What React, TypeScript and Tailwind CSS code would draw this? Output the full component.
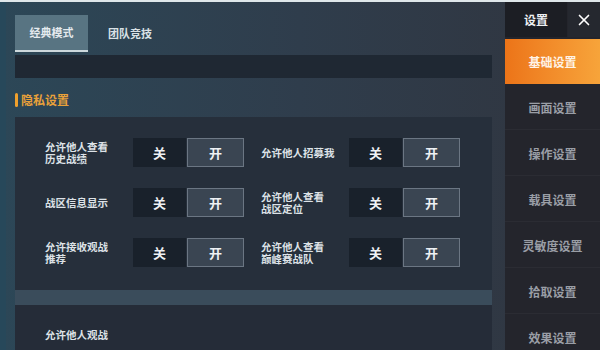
import { X } from "lucide-react";

const rows = [
  [
    { label: "允许他人查看\n历史战绩" },
    { label: "允许他人招募我" },
  ],
  [
    { label: "战区信息显示" },
    { label: "允许他人查看\n战区定位" },
  ],
  [
    { label: "允许接收观战\n推荐" },
    { label: "允许他人查看\n巅峰赛战队" },
  ],
];

const menu = ["画面设置", "操作设置", "载具设置", "灵敏度设置", "拾取设置", "效果设置"];

function Toggle() {
  return (
    <div className="flex h-[29px] w-[111px] text-[13px] font-bold text-[#eef1f4]">
      <div className="flex w-[53px] items-center justify-center bg-[#19212b]">关</div>
      <div className="ml-px flex flex-1 items-center justify-center border border-[#6b7683] bg-[#3a4552]">开</div>
    </div>
  );
}

function Setting({ label }: { label: string }) {
  return (
    <div className="flex items-center">
      <div className="w-[88px] whitespace-pre-line text-[10.5px] font-bold leading-[12px] text-[#dde2e7]">{label}</div>
      <Toggle />
    </div>
  );
}

export default function App() {
  return (
    <div
      className="flex h-[350px] w-[600px] overflow-hidden border-t-2 border-[#dfe7ea] bg-gradient-to-r from-[#2c4757] via-[#2f3d4c] to-[#30353f]"
      style={{ fontFamily: '"Noto Sans CJK SC", "Noto Sans", sans-serif' }}
    >
      <div className="flex w-[505px] flex-col border-l-[6px] border-[#27485a] pl-[9px] pr-[13px]">
        <div className="mt-[13px] flex h-[37px] items-stretch">
          <div className="flex w-[73px] items-center justify-center border-b-2 border-[#cdd8dc] bg-[#587482] text-[11px] font-bold text-[#e4eaee]">
            经典模式
          </div>
          <div className="ml-[20px] flex items-center text-[11px] font-bold text-[#d9e0e5]">团队竞技</div>
        </div>
        <div className="mt-[3px] h-[23px] bg-[#1f2833]" />
        <div className="mt-[14px] flex h-[16px] items-center">
          <span className="mr-[3px] h-[14px] w-[3px] rounded-sm bg-[#f0a02c]" />
          <span className="text-[12px] font-bold text-[#e9a13a]">隐私设置</span>
        </div>
        <div className="mt-[9px] flex h-[173px] flex-col gap-[21px] bg-[#262f3b] pl-[30px] pt-[21px]">
          {rows.map((row, i) => (
            <div key={i} className="flex gap-[17px]">
              {row.map((s) => (
                <Setting key={s.label} label={s.label} />
              ))}
            </div>
          ))}
        </div>
        <div className="h-[15px] bg-[#3a4c5b]" />
        <div className="flex-1 bg-[#252c38] pl-[30px] pt-[22px] text-[10.5px] font-bold text-[#dde2e7]">允许他人观战</div>
      </div>

      <div className="flex w-[95px] flex-col overflow-hidden bg-[#24252c]">
        <div className="flex h-[35px] shrink-0">
          <div className="flex w-[62px] items-center justify-center bg-[#1c1e24] text-[12px] font-bold text-[#eef0f2]">设置</div>
          <div className="ml-px flex flex-1 items-center justify-center bg-[#25282f] text-white">
            <X size={18} strokeWidth={2.2} />
          </div>
        </div>
        <div className="mt-[2px] flex h-[45px] shrink-0 items-center justify-center bg-gradient-to-r from-[#ec7418] to-[#f7a43a] text-[12px] font-bold text-[#fff3e6]">
          基础设置
        </div>
        {menu.map((m) => (
          <div key={m} className="flex h-[46px] shrink-0 items-center justify-center border-b border-[#2b2c33] pt-[2px] text-[12px] font-bold text-[#9a9ea6]">
            {m}
          </div>
        ))}
      </div>
    </div>
  );
}
